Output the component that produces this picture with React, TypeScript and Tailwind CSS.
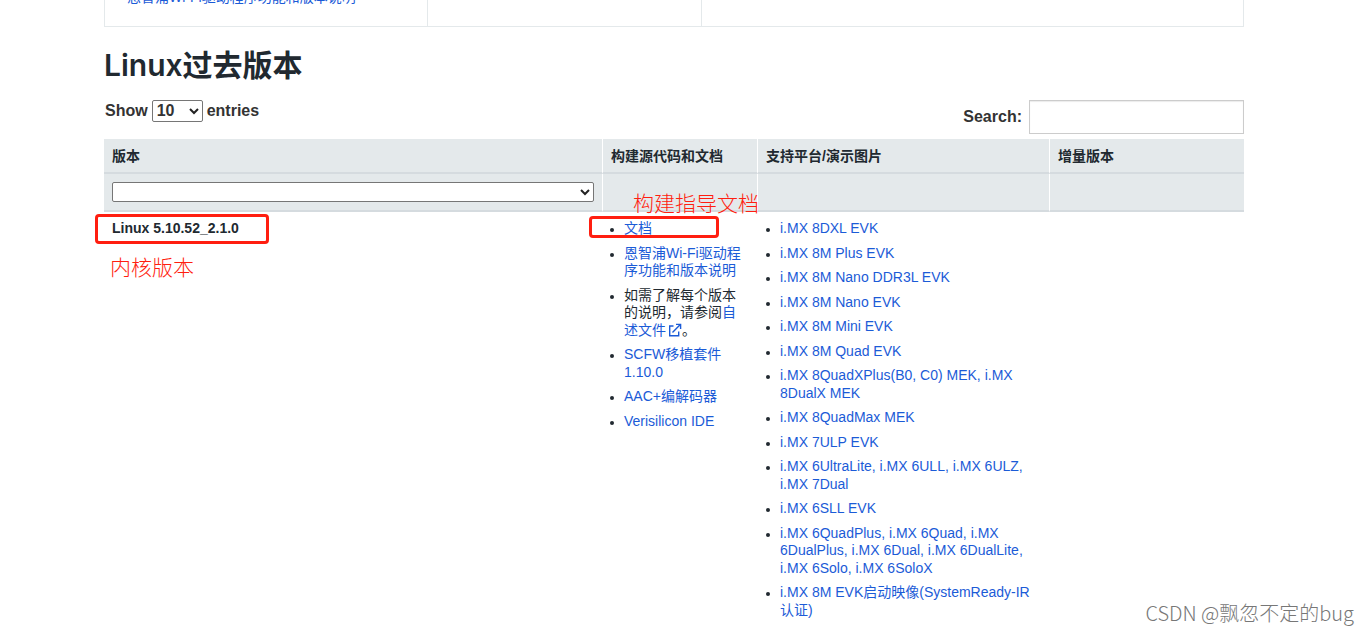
// App.tsx
import { useState } from 'react';

type DocItem = {
  before?: string;
  link: string;
  external?: boolean;
  after?: string;
};

const docs: DocItem[] = [
  { link: '文档' },
  { link: '恩智浦Wi-Fi驱动程序功能和版本说明' },
  { before: '如需了解每个版本的说明，请参阅', link: '自述文件', external: true, after: '。' },
  { link: 'SCFW移植套件1.10.0' },
  { link: 'AAC+编解码器' },
  { link: 'Verisilicon IDE' },
];

const platforms = [
  'i.MX 8DXL EVK',
  'i.MX 8M Plus EVK',
  'i.MX 8M Nano DDR3L EVK',
  'i.MX 8M Nano EVK',
  'i.MX 8M Mini EVK',
  'i.MX 8M Quad EVK',
  'i.MX 8QuadXPlus(B0, C0) MEK, i.MX 8DualX MEK',
  'i.MX 8QuadMax MEK',
  'i.MX 7ULP EVK',
  'i.MX 6UltraLite, i.MX 6ULL, i.MX 6ULZ, i.MX 7Dual',
  'i.MX 6SLL EVK',
  'i.MX 6QuadPlus, i.MX 6Quad, i.MX 6DualPlus, i.MX 6Dual, i.MX 6DualLite, i.MX 6Solo, i.MX 6SoloX',
  'i.MX 8M EVK启动映像(SystemReady-IR认证)',
];

const headers = ['版本', '构建源代码和文档', '支持平台/演示图片', '增量版本'];

function ExternalIcon() {
  return (
    <svg
      className="ml-0.5 inline-block h-3.5 w-3.5 align-[-2px]"
      viewBox="0 0 14 14"
      fill="none"
      stroke="currentColor"
      strokeWidth="1.4"
      aria-hidden="true"
    >
      <path d="M5.5 3H1.7v9.8h9V8.5M4.5 9.5l7.8-7.9M8 1.4h4.6V6" />
    </svg>
  );
}

function Chevron() {
  return (
    <svg
      className="pointer-events-none absolute inset-y-0 right-1 my-auto h-2.5 w-2.5"
      viewBox="0 0 10 10"
      fill="none"
      stroke="#222"
      strokeWidth="2"
      aria-hidden="true"
    >
      <path d="M1 3l4 4 4-4" />
    </svg>
  );
}

export default function App() {
  const [pageSize, setPageSize] = useState('10');
  const [version, setVersion] = useState('');
  const [search, setSearch] = useState('');

  return (
    <div className="relative min-h-screen overflow-hidden bg-white pr-5 font-['Liberation_Sans','Noto_Sans_CJK_SC',sans-serif] text-sm text-[#212930]">
      <main className="mx-auto max-w-[1140px]">
        {/* Tail of the current releases table */}
        <div className="flex h-[27px] border border-t-0 border-[#e4e9eb]">
          <div className="w-[323px] border-r border-[#e4e9eb] pl-[22px]">
            <a href="#wifi" className="-mt-3 block leading-[18px] whitespace-nowrap text-[#1b5bd7]">
              恩智浦Wi-Fi驱动程序功能和版本说明
            </a>
          </div>
          <div className="w-[274px] border-r border-[#e4e9eb]" />
          <div className="flex-1" />
        </div>

        <h1 className="mt-5 font-['Inter','Noto_Sans_CJK_SC',sans-serif] text-[30px] leading-9 font-semibold">
          Linux过去版本
        </h1>

        {/* Table controls */}
        <div className="mt-[17px] flex items-start justify-between text-base font-bold text-[#333]">
          <label className="flex items-center gap-1 pl-px leading-[22px]">
            Show
            <span className="relative">
              <select
                className="block h-[22px] w-[51px] appearance-none rounded-xs border border-[#767676] bg-white pl-1 leading-5"
                value={pageSize}
                onChange={(e) => setPageSize(e.target.value)}
              >
                <option>10</option>
                <option>25</option>
                <option>50</option>
                <option>100</option>
              </select>
              <Chevron />
            </span>
            entries
          </label>
          <label className="flex items-center gap-[7px]">
            Search:
            <input
              type="search"
              className="h-[34px] w-[215px] border border-[#ccc] bg-white px-2 font-normal shadow-[inset_0_1px_1px_rgba(0,0,0,0.08)]"
              value={search}
              onChange={(e) => setSearch(e.target.value)}
            />
          </label>
        </div>

        <table className="mt-[5px] w-full table-fixed border-separate border-spacing-0">
          <colgroup>
            <col />
            <col className="w-[155px]" />
            <col className="w-[292px]" />
            <col className="w-[194px]" />
          </colgroup>
          <thead className="bg-[#e4e9eb]">
            <tr>
              {headers.map((h) => (
                <th
                  key={h}
                  className="h-[35px] border-r border-b-2 border-r-white border-b-[#d5dbdf] px-2 text-left leading-[18px] last:border-r-0"
                >
                  {h}
                </th>
              ))}
            </tr>
            <tr>
              <td className="h-[38px] border-r border-b-2 border-r-white border-b-[#d5dbdf] px-2">
                <div className="relative">
                  <select
                    aria-label="版本"
                    className="block h-5 w-full appearance-none rounded-xs border border-[#767676] bg-white"
                    value={version}
                    onChange={(e) => setVersion(e.target.value)}
                  >
                    <option value=""></option>
                    <option>Linux 5.10.52_2.1.0</option>
                  </select>
                  <Chevron />
                </div>
              </td>
              <td className="relative border-r border-b-2 border-r-white border-b-[#d5dbdf]">
                <span className="absolute top-4 left-[30px] z-10 text-[21px] leading-7 font-light whitespace-nowrap text-[#ff1e10]">
                  构建指导文档
                </span>
              </td>
              <td className="border-r border-b-2 border-r-white border-b-[#d5dbdf]" />
              <td className="border-b-2 border-b-[#d5dbdf]" />
            </tr>
          </thead>
          <tbody>
            <tr className="align-top leading-tight">
              <td className="relative px-2 pt-2 font-bold">
                Linux 5.10.52_2.1.0
                <span className="absolute top-0.5 -left-[9px] h-[30px] w-[174px] rounded-sm border-3 border-[#ff1e10]" />
                <span className="absolute top-[42px] left-1.5 text-[21px] leading-7 font-light text-[#ff1e10]">
                  内核版本
                </span>
              </td>
              <td className="relative pt-2 pr-3 pl-[21px]">
                <ul className="flex list-none flex-col gap-[7px]">
                  {docs.map((d) => (
                    <li key={d.link} className="relative">
                      <span className="absolute top-2 -left-3.5 h-1 w-1 rounded-full bg-[#212930]" />
                      {d.before}
                      <a href="#docs" className="text-[#1b5bd7]">
                        {d.link}
                        {d.external && <ExternalIcon />}
                      </a>
                      {d.after}
                    </li>
                  ))}
                </ul>
                <span className="absolute top-1 -left-3.5 h-[22px] w-[130px] rounded-sm border-3 border-[#ff1e10]" />
              </td>
              <td className="pt-2 pr-4 pl-[22px]">
                <ul className="flex list-none flex-col gap-[7px]">
                  {platforms.map((p) => (
                    <li key={p} className="relative">
                      <span className="absolute top-2 -left-3.5 h-1 w-1 rounded-full bg-[#212930]" />
                      <a href="#platforms" className="text-[#1b5bd7]">
                        {p}
                      </a>
                    </li>
                  ))}
                </ul>
              </td>
              <td />
            </tr>
          </tbody>
        </table>
      </main>

      <div className="absolute right-3.5 bottom-1.5 font-['Noto_Sans_CJK_SC',sans-serif] text-xl leading-7 font-light text-[#777]">
        CSDN @飘忽不定的bug
      </div>
    </div>
  );
}
